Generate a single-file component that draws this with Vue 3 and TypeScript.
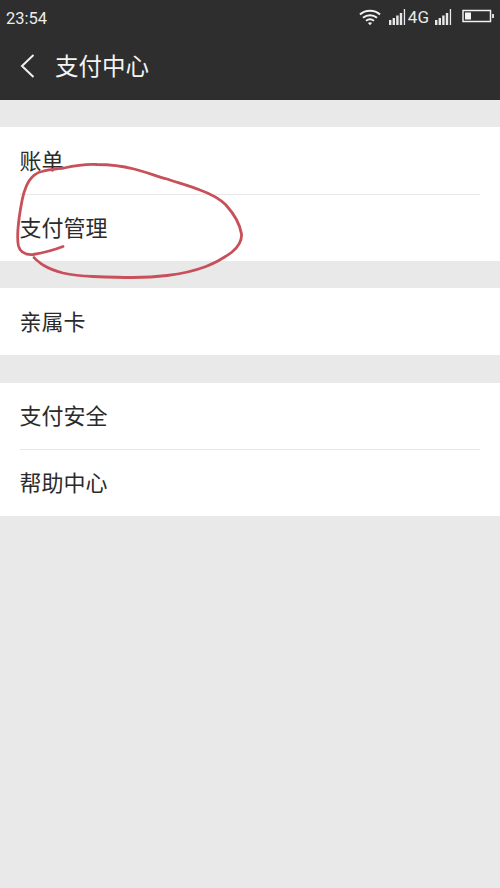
<script setup lang="ts">
interface Row { label: string }
const groups: Row[][] = [
  [{ label: '账单' }, { label: '支付管理' }],
  [{ label: '亲属卡' }],
  [{ label: '支付安全' }, { label: '帮助中心' }],
]
</script>

<template>
  <div class="page">
    <header class="head">
      <div class="status">
        <span class="time">23:54</span>
        <div class="indicators">
          <svg class="wifi" width="22" height="18" viewBox="0 0 22 18" fill="none" stroke="#f2f2f2" stroke-width="2">
            <path d="M1 6.500C6.500 1.500 15.500 1.500 21 6.500" />
            <path d="M4 9.800C8 6.300 14 6.300 18 9.800" />
            <path d="M7 12.800C9.500 10.900 12.500 10.900 15 12.800" />
            <path d="M9 15 11 17.300 13 15C12 14 10 14 9 15Z" fill="#f2f2f2" stroke="none" />
          </svg>
          <svg class="bars" width="18" height="16" viewBox="0 0 18 16" fill="#e8e8e8">
            <rect x="0" y="11" width="2.400" height="5" />
            <rect x="3.600" y="9" width="2.400" height="7" />
            <rect x="7.200" y="6.500" width="2.400" height="9.500" />
            <rect x="10.800" y="4" width="2.400" height="12" />
            <rect x="14.800" y="0" width="1.300" height="16" />
          </svg>
          <span class="net">4G</span>
          <svg class="bars second" width="18" height="16" viewBox="0 0 18 16" fill="#e8e8e8">
            <rect x="0" y="11" width="2.400" height="5" />
            <rect x="3.600" y="9" width="2.400" height="7" />
            <rect x="7.200" y="6.500" width="2.400" height="9.500" />
            <rect x="10.800" y="4" width="2.400" height="12" />
            <rect x="14.800" y="0" width="1.300" height="16" />
          </svg>
          <svg class="battery" width="33" height="14" viewBox="0 0 33 14">
            <rect x="1" y="1.500" width="27.500" height="11" fill="none" stroke="#f0f0f0" stroke-width="1.500" />
            <rect x="3" y="3.500" width="6" height="7" fill="#f4f4f4" />
            <rect x="30" y="5" width="2" height="4" fill="#d8d8d8" />
          </svg>
        </div>
      </div>
      <div class="nav">
        <svg class="back" width="16" height="26" viewBox="0 0 16 26" fill="none" stroke="#f0f0f0" stroke-width="2">
          <path d="M13.500 2 2 13 13.500 24" />
        </svg>
        <h1 class="title">支付中心</h1>
      </div>
    </header>

    <main class="content">
      <section v-for="(group, g) in groups" :key="g" class="group">
        <div v-for="row in group" :key="row.label" class="row">
          <span class="label">{{ row.label }}</span>
        </div>
      </section>
    </main>

    <svg class="scribble" width="500" height="888" viewBox="0 0 500 888" fill="none">
      <path
        d="M63 246.500C54 250 42 253 33 254.500C25 255 20 252 18.500 246C16.500 237 18 224 20.500 209C22.500 196 25 187 29 181C33 175 37 172.500 42 171.500C50 169.500 57 169 64 168C75 165.500 86 164 97 164.500C110 164.500 122 166 134 169C146 172 156 176 167 179C179 183 190 186 200 190C211 194 220 199 226 205C234 214 240 224 241.500 234C242 241 238 247 232 252C224 258 215 263 206 266.500C194 271 180 274 167 275.500C155 277 144 277.500 133 277.500C119 277.500 106 277 93 276.500C82 276 72 275 63 273C55 271 48 268 43 265C39 262 36 260 34 257.500"
        stroke="#c8505a"
        stroke-width="2.800"
        stroke-linecap="round"
        stroke-linejoin="round"
      />
    </svg>
  </div>
</template>

<style scoped>
.page {
  position: relative;
  width: 500px;
  height: 888px;
  overflow: hidden;
  background: #e9e9e9;
  font-family: "Noto Sans CJK SC", "Noto Sans", sans-serif;
}
.head {
  height: 100px;
  background: #2e2e2e;
  color: #f2f2f2;
}
.status {
  height: 36px;
  display: flex;
  align-items: center;
  justify-content: space-between;
  padding: 0 5px 0 6px;
}
.time {
  font-family: Roboto, "Liberation Sans", sans-serif;
  font-size: 16.500px;
  color: #ececec;
}
.indicators {
  display: flex;
  align-items: center;
}
.wifi { margin-right: 8px; margin-top: -3px; }
.bars { margin-top: -3px; }
.net {
  font-family: Roboto, "Liberation Sans", sans-serif;
  font-size: 17px;
  line-height: 16px;
  color: #e8e8e8;
  margin: -2px 6px 0 1px;
}
.second { margin-right: 9px; }
.battery { margin-top: -4px; }
.nav {
  height: 64px;
  display: flex;
  align-items: center;
  padding: 0 0 7px 20px;
  box-sizing: border-box;
}
.back { margin-right: 19px; margin-top: 2px; }
.title {
  margin: 0;
  font-size: 23.500px;
  font-weight: 400;
  color: #f4f4f4;
}
.content {
  padding-top: 27.200px;
  display: flex;
  flex-direction: column;
  gap: 27.600px;
}
.group {
  background: #ffffff;
  padding-left: 20px;
  padding-right: 20px;
}
.row {
  height: 66.750px;
  display: flex;
  align-items: center;
  box-sizing: border-box;
  padding-bottom: 3px;
}
.row + .row {
  border-top: 1px solid #e8e8e8;
}
.label {
  font-size: 22px;
  color: #2b2b2b;
  margin-left: -0.500px;
}
.group:last-child .label {
  margin-top: -2px;
}
.scribble {
  position: absolute;
  top: 0;
  left: 0;
  pointer-events: none;
}
</style>
